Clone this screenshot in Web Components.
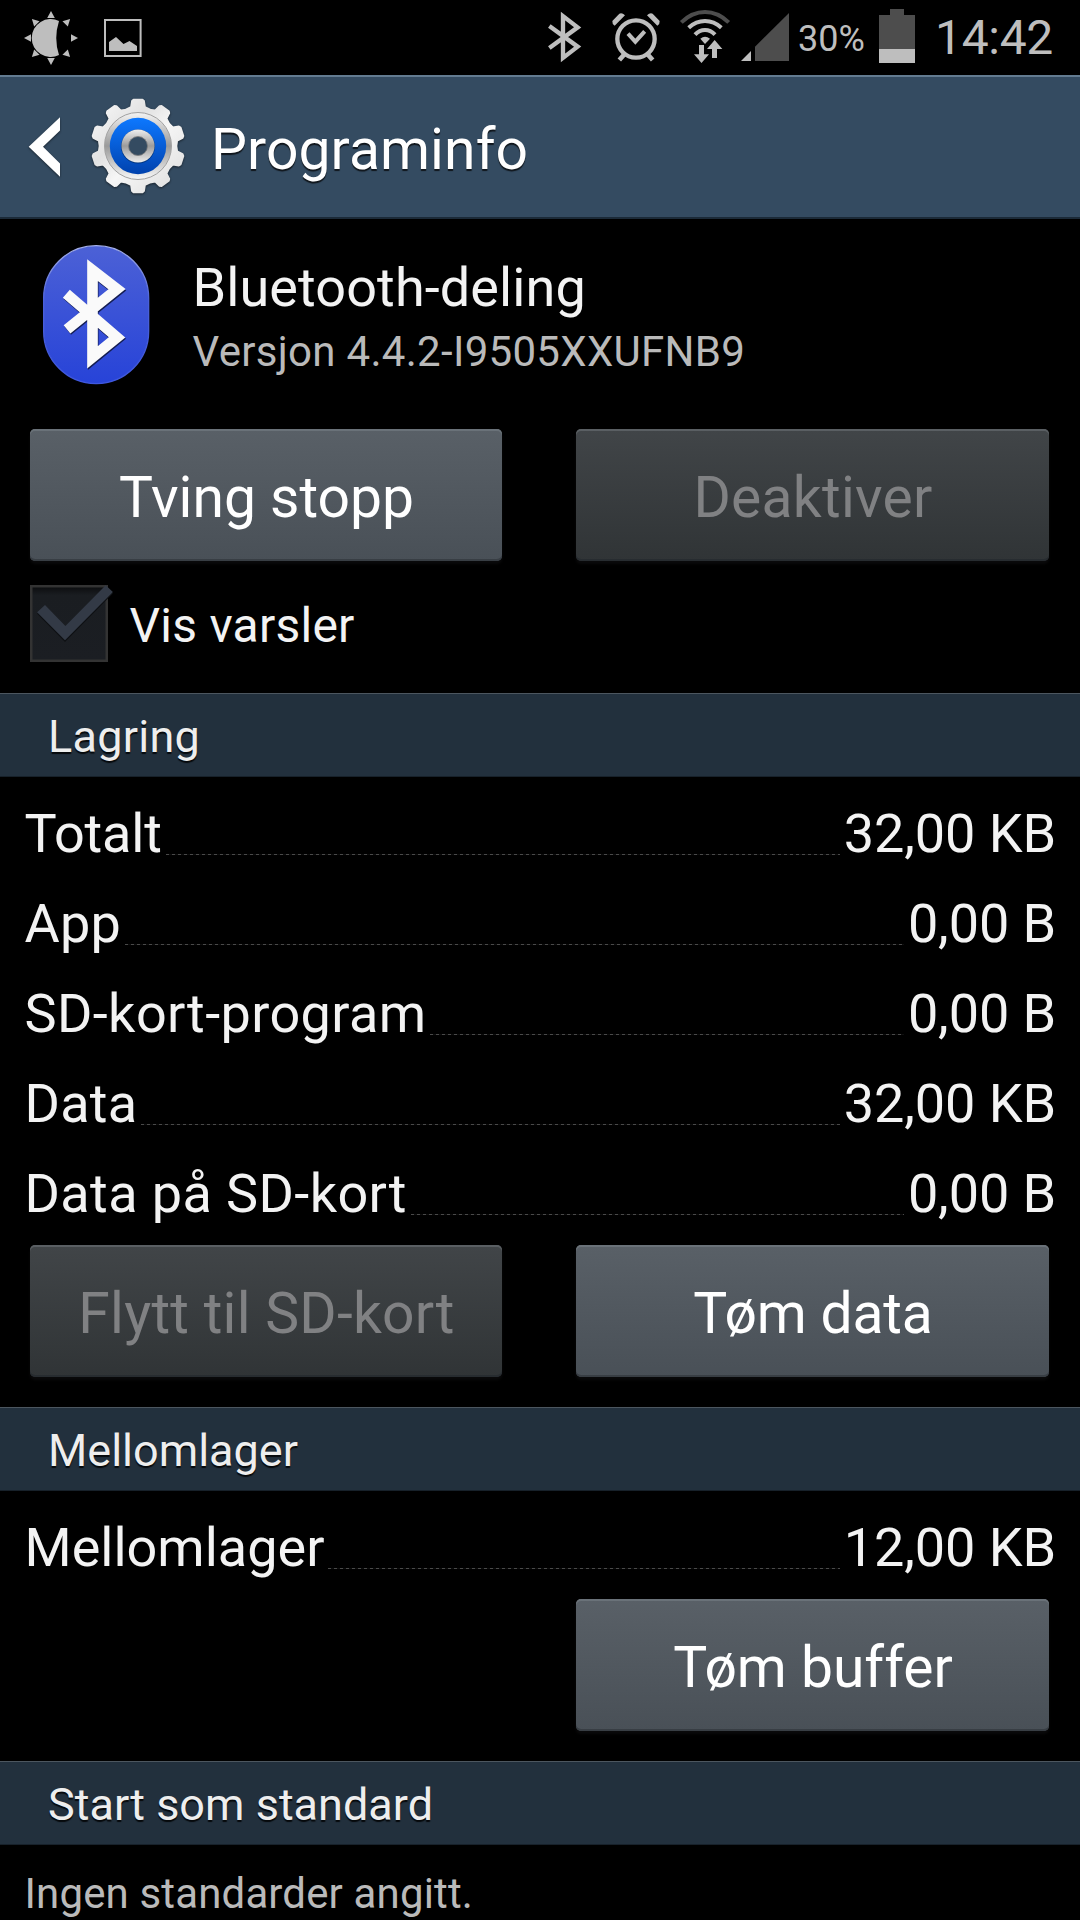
<!DOCTYPE html>
<html lang="nb">
<head>
<meta charset="utf-8">
<title>Programinfo</title>
<style>
  body {
    margin: 0;
    background: #000;
    color: #f3f3f3;
    font-family: Roboto, sans-serif;
    overflow: hidden;
  }
</style>
</head>
<body>
<app-screen></app-screen>

<script>
// Small helper: attach an open root and clone the markup ------------
function define(name, html, setup) {
  const template = document.createElement('template');
  template.innerHTML = html;

  customElements.define(name, class extends HTMLElement {
    constructor() {
      super();
      this.attachShadow({ mode: 'open' });
      this.shadowRoot.appendChild(template.content.cloneNode(true));
    }

    connectedCallback() {
      if (setup) setup(this.shadowRoot);
    }
  });
}

// Status bar --------------------------------------------------------
define('status-bar', `
  <style>
    :host {
      display: flex;
      height: 75px;
      color: #bebebe;
      white-space: nowrap;
    }
    svg { display: block; flex: none; }
    .space { flex: 1; }
    .percent {
      width: 79px;
      margin-left: -2px;
      font-size: 36px;
      line-height: 78px;
    }
    .clock {
      width: 145px;
      font-size: 48px;
      line-height: 75px;
      letter-spacing: -0.3px;
    }
  </style>

  <svg width="80" height="75" viewBox="0 0 80 75" fill="#bebebe">
    <path d="M59 20.900A19 19 0 1 0 59 55.100Q53.500 38 59 20.900Z"/>
    <g id="rays"></g>
  </svg>
  <svg width="80" height="75" viewBox="80 0 80 75" fill="#bebebe">
    <path fill="none" stroke="#bebebe" stroke-width="2" d="M105 20H140.600V56H105Z"/>
    <path d="M109 51V42L116 37L123.500 44L129.500 41L137 46V51Z"/>
  </svg>

  <div class="space"></div>

  <svg width="60" height="75" viewBox="0 0 180 225" fill="none" stroke="#bebebe" stroke-width="13" stroke-miterlimit="10">
    <path d="M28 78L113 140L69 173.800V48.200L113 82L28 144"/>
  </svg>
  <svg width="70" height="75" viewBox="180 0 210 225" fill="none" stroke="#bebebe" stroke-width="13">
    <circle cx="288" cy="117" r="56"/>
    <path stroke-width="12" d="M264 101L286 125L314 94"/>
    <path stroke-width="14" d="M254 162L238 180M322 162L338 180"/>
    <path stroke="none" fill="#bebebe" d="M217 63L238 41Q246 37 255 46L224 77Q216 72 217 63ZM359 63L338 41Q330 37 321 46L352 77Q360 72 359 63Z"/>
  </svg>
  <svg width="70" height="75" viewBox="390 0 210 225" fill="none" stroke="#bebebe" stroke-width="12">
    <path stroke="#4d4d4d" d="M424 67Q456 36 495 36T566 67"/>
    <path d="M446 83Q468 63 495 63T544 83"/>
    <path d="M465 104Q478 90 495 90T525 104"/>
    <path stroke="none" fill="#bebebe" d="M481 116Q495 104 510 116L495 132Z"/>
    <path stroke="none" fill="#bebebe" d="M477 135H492V163H507L484.500 189L462 163H477ZM516 174V147H501L524 120L547 147H531V174Z"/>
  </svg>
  <svg width="60" height="75" viewBox="600 0 180 225">
    <path fill="#bebebe" d="M603 183L633 153V183Z"/>
    <path fill="#4d4d4d" d="M645 183V140L747 39V183Z"/>
  </svg>

  <span class="percent">30%</span>

  <svg width="58" height="75" viewBox="231 0 174 225">
    <path fill="#4d4d4d" d="M237 147V45H270V27H312V45H345V147Z"/>
    <path fill="#bebebe" d="M237 147H345V189H237Z"/>
  </svg>

  <span class="clock">14:42</span>
`, root => {
  const ray = angle => `<path d="M47.200 18L51 11L54.800 18Z" transform="rotate(${angle} 51 38)"/>`;
  root.getElementById('rays').innerHTML = [0, 45, 90, 135, 180, 225, 270, 315].map(ray).join('');
});

// Action bar --------------------------------------------------------
define('gear-icon', `
  <style>
    :host { display: block; width: 100px; height: 100px; }
    svg { display: block; filter: drop-shadow(0 1px 1px rgba(0, 0, 0, 0.55)); }
  </style>
  <svg width="100" height="100" viewBox="-50 -50 100 100">
    <defs>
      <linearGradient id="metal" x1="0" y1="0" x2="1" y2="1">
        <stop offset="0" stop-color="#fafafa"/>
        <stop offset="0.35" stop-color="#e2e2e2"/>
        <stop offset="0.55" stop-color="#f6f6f6"/>
        <stop offset="1" stop-color="#dcdcdc"/>
      </linearGradient>
      <linearGradient id="ring" x1="0" y1="0" x2="0" y2="1">
        <stop offset="0" stop-color="#f4f4f4"/>
        <stop offset="0.5" stop-color="#9a9a9a"/>
        <stop offset="1" stop-color="#f8f8f8"/>
      </linearGradient>
      <linearGradient id="blue" x1="0" y1="0" x2="0" y2="1">
        <stop offset="0" stop-color="#0d78ff"/>
        <stop offset="1" stop-color="#0042ae"/>
      </linearGradient>
      <linearGradient id="hub" x1="0" y1="0" x2="0" y2="1">
        <stop offset="0" stop-color="#efefef"/>
        <stop offset="0.5" stop-color="#9b9b9b"/>
        <stop offset="1" stop-color="#ededed"/>
      </linearGradient>
    </defs>
    <path id="teeth" fill="url(#metal)" stroke="url(#metal)" stroke-width="2" stroke-linejoin="round"/>
    <circle r="33.500" fill="url(#ring)" stroke="#a2a2a2" stroke-width="1"/>
    <circle r="28.200" fill="url(#blue)"/>
    <circle r="17" cy="0.500" fill="#00357f"/>
    <circle r="16.600" fill="url(#hub)"/>
    <circle r="9.500" fill="#344b61" stroke="#7d7d7d" stroke-width="0.800"/>
  </svg>
`, root => {
  const at = (r, deg) => {
    const a = (deg - 90) * Math.PI / 180;
    return `${(r * Math.cos(a)).toFixed(2)} ${(r * Math.sin(a)).toFixed(2)}`;
  };
  // ten teeth, 36 degrees apart, with a curved valley after each
  let d = '';
  for (let i = 0; i < 10; i++) {
    const c = i * 36;
    d += `${i ? 'L' : 'M'}${at(39.5, c - 10)}L${at(45.3, c - 7.5)}L${at(46.4, c - 5.5)}L${at(46.4, c + 5.5)}L${at(45.3, c + 7.5)}L${at(39.5, c + 10)}`;
    d += `Q${at(37.5, c + 18)} ${at(39.5, c + 26)}`;
  }
  root.getElementById('teeth').setAttribute('d', d + 'Z');
});

define('action-bar', `
  <style>
    :host {
      display: flex;
      align-items: center;
      height: 144px;
      box-sizing: border-box;
      padding-left: 28px;
      border-top: 2px solid #637c91;
      border-bottom: 2px solid #1b2a38;
      background: #344b61;
      color: #fff;
    }
    .back { display: block; filter: drop-shadow(0 1px 1px rgba(0, 0, 0, 0.5)); }
    gear-icon { margin: 0 0 2px 27.3px; }
    span {
      margin-left: 22.7px;
      padding-top: 6px;
      font-size: 57px;
      line-height: 134px;
      letter-spacing: 0.1px;
      text-shadow: 0 2px 1px #10161c;
      white-space: nowrap;
    }
  </style>
  <svg class="back" width="33" height="62" viewBox="28 116 33 62"><path fill="#fff" d="M28.700 146.700L60 117.300V130.500L43 146.700L60 163.500V176.800Z"/></svg>
  <gear-icon></gear-icon>
  <span><slot></slot></span>
`);

// App header --------------------------------------------------------
define('app-header', `
  <style>
    :host {
      display: flex;
      align-items: flex-start;
      height: 210px;
      box-sizing: border-box;
      padding: 26px 0 0 43px;
      white-space: nowrap;
    }
    svg { display: block; flex: none; }
    .text { margin-left: 42px; }
    .name { padding: 8px 0 0 0.5px; font-size: 54px; line-height: 70px; letter-spacing: 0.1px; }
    .version { padding-left: 0.5px; font-size: 42px; line-height: 58px; letter-spacing: 0.3px; color: #bababa; }
  </style>
  <svg width="107" height="140" viewBox="129 75 321 420">
    <defs>
      <linearGradient id="pill" x1="0" y1="0" x2="0" y2="1">
        <stop offset="0" stop-color="#4c61d6"/>
        <stop offset="1" stop-color="#2743d8"/>
      </linearGradient>
      <linearGradient id="rim" x1="0" y1="0" x2="0" y2="1">
        <stop offset="0" stop-color="#a5b0ea"/>
        <stop offset="0.4" stop-color="#4a60d8"/>
        <stop offset="1" stop-color="#3f58de"/>
      </linearGradient>
    </defs>
    <rect x="131" y="77" width="315" height="414" rx="157" fill="url(#pill)" stroke="url(#rim)" stroke-width="4"/>
    <g fill="none" stroke-width="32" stroke-miterlimit="10">
      <path stroke="#141d52" d="M201 225L353 356L279.500 416V154.400L353 211.500L203 332"/>
      <path stroke="#fafafa" d="M199 221L351 352L277.500 412V150.400L351 207.500L201 328"/>
    </g>
  </svg>
  <div class="text">
    <div class="name"><slot></slot></div>
    <div class="version"><slot name="version"></slot></div>
  </div>
`);

// Buttons -----------------------------------------------------------
define('holo-button', `
  <style>
    :host { display: block; }
    button {
      display: block;
      width: 100%;
      height: 132px;
      box-sizing: border-box;
      padding: 5px 0 0 1px;
      border: 0;
      border-radius: 5px;
      background: linear-gradient(#596067, #495057);
      box-shadow: inset 0 2px #6a7279, inset 0 -2px #383e44, 0 3px 3px #0a0a0b;
      color: #fff;
      font: 57px/127px Roboto, sans-serif;
      letter-spacing: var(--track, 0);
      white-space: nowrap;
    }
    :host([disabled]) button {
      background: linear-gradient(#414548, #303436);
      box-shadow: inset 0 2px #5a5f63, inset 0 -2px #272c30, 0 3px 3px #0a0a0b;
      color: #808183;
    }
  </style>
  <button><slot></slot></button>
`);

define('button-row', `
  <style>
    :host {
      display: grid;
      grid-template-columns: 472px 473px;
      column-gap: 74px;
      padding-left: 30px;
    }
    ::slotted([end]) { grid-column: 2; }
  </style>
  <slot></slot>
`);

// Checkbox ----------------------------------------------------------
define('check-item', `
  <style>
    :host { display: flex; height: 78px; padding: 24px 0 30px 30px; }
    svg { display: block; overflow: visible; }
    span { margin-left: 21.5px; font-size: 48px; line-height: 81px; letter-spacing: 0.25px; }
  </style>
  <svg width="78" height="77" viewBox="0 0 78 77">
    <defs>
      <linearGradient id="well" x1="0" y1="0" x2="0" y2="1">
        <stop offset="0" stop-color="#0b0c0e"/>
        <stop offset="0.12" stop-color="#1a1d21"/>
        <stop offset="1" stop-color="#1b1e23"/>
      </linearGradient>
    </defs>
    <rect x="1.250" y="1.250" width="75.500" height="74.500" fill="url(#well)" stroke="#333" stroke-width="2.500"/>
    <path fill="#0e1013" d="M7.100 28.800L15 21.500L35.400 42.500L75.700 2L82.900 8.500L35 57Z"/>
    <path fill="#333a46" d="M7.100 27.300L15 20L35.400 41L75.700 0.300L82.900 7L35 55.300Z"/>
  </svg>
  <span><slot></slot></span>
`);

// Section title -----------------------------------------------------
define('section-title', `
  <style>
    :host {
      display: block;
      height: 84px;
      box-sizing: border-box;
      padding-left: 48px;
      border-top: 1px solid #4c565f;
      border-bottom: 1px solid #17212a;
      background: #22303d;
      color: #eee;
      font-size: 45px;
      line-height: 86px;
      letter-spacing: var(--track, 0);
      text-shadow: 0 2px 1px #06090c;
    }
  </style>
  <slot></slot>
`);

// Label, dotted leader, value ---------------------------------------
define('size-row', `
  <style>
    :host {
      display: flex;
      height: 90px;
      padding: 0 24px 0 24.5px;
      font-size: 54px;
      line-height: 90px;
      white-space: nowrap;
    }
    .label { letter-spacing: var(--track, 0); }
    .value { letter-spacing: -0.1px; }
    .dots {
      flex: 1;
      height: 1px;
      margin: 65px 4px 0 4px;
      background: repeating-linear-gradient(90deg, #4a4a4a 0 3px, #0e0e0e 3px 6px);
    }
  </style>
  <span class="label"><slot></slot></span>
  <span class="dots"></span>
  <span class="value"><slot name="value"></slot></span>
`);

// Screen ------------------------------------------------------------
define('app-screen', `
  <style>
    :host { display: block; width: 1080px; height: 1920px; overflow: hidden; background: #000; }
    .rows { padding: 12px 0 6px; }
    .last { padding-bottom: 30px; }
    .note { margin: 0; padding: 24px 0 0 24.5px; font-size: 42px; line-height: 50px; letter-spacing: 0.15px; color: #bababa; }
    .tight { --track: -0.15px; }
    .wide { --track: 0.25px; }
    .wider { --track: 0.4px; }
  </style>

  <status-bar></status-bar>
  <action-bar>Programinfo</action-bar>

  <app-header>Bluetooth-deling<span slot="version">Versjon 4.4.2-I9505XXUFNB9</span></app-header>
  <button-row>
    <holo-button>Tving stopp</holo-button>
    <holo-button class="wide" disabled>Deaktiver</holo-button>
  </button-row>
  <check-item>Vis varsler</check-item>

  <section-title class="wide">Lagring</section-title>
  <div class="rows">
    <size-row class="tight">Totalt<span slot="value">32,00 KB</span></size-row>
    <size-row class="wide">App<span slot="value">0,00 B</span></size-row>
    <size-row class="wider">SD-kort-program<span slot="value">0,00 B</span></size-row>
    <size-row class="wide">Data<span slot="value">32,00 KB</span></size-row>
    <size-row class="wider">Data på SD-kort<span slot="value">0,00 B</span></size-row>
  </div>
  <button-row class="last">
    <holo-button class="wide" disabled>Flytt til SD-kort</holo-button>
    <holo-button class="tight">Tøm data</holo-button>
  </button-row>

  <section-title>Mellomlager</section-title>
  <div class="rows">
    <size-row>Mellomlager<span slot="value">12,00 KB</span></size-row>
  </div>
  <button-row class="last">
    <holo-button end>Tøm buffer</holo-button>
  </button-row>

  <section-title>Start som standard</section-title>
  <p class="note">Ingen standarder angitt.</p>
`);
</script>
</body>
</html>
